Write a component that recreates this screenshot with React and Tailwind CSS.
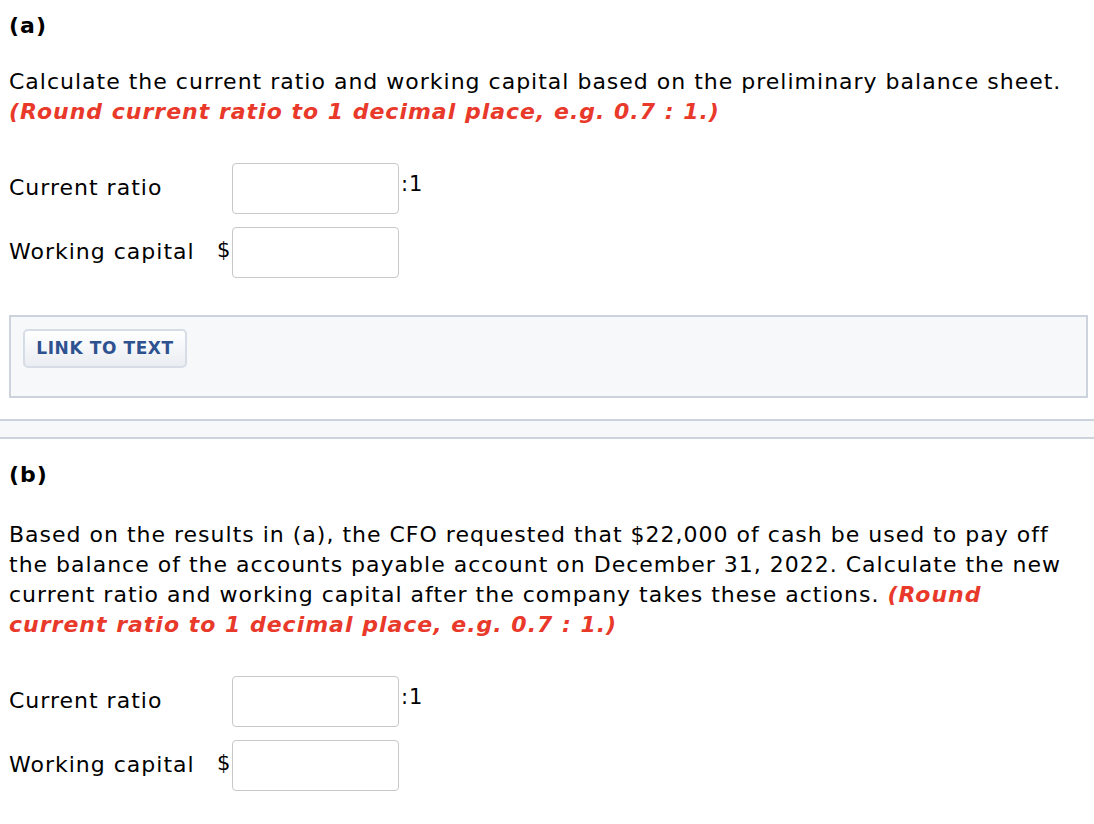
import React from "react";

const font = { fontFamily: '"DejaVu Sans", Verdana, sans-serif' };

function Row({ label, dollar, suffix }) {
  return (
    <div className="flex items-start">
      <div className="w-[208px] whitespace-nowrap pt-[10px] text-[22px] leading-[30px] tracking-[1px] text-black">{label}</div>
      <div className="w-[15px] pt-[8px] text-[21px] leading-[30px] text-black">{dollar ? "$" : ""}</div>
      <div className="h-[51px] w-[167px] rounded-[4px] border border-[#c8c8c8] bg-white" />
      {suffix ? <div className="pl-[2px] pt-[6px] text-[21px] leading-[30px] tracking-[1px] text-black">:1</div> : null}
    </div>
  );
}

const red = "font-bold italic text-[#e8392a]";

export default function App() {
  return (
    <div className="w-[1094px] bg-white text-black" style={font}>
      <div className="px-[9px] pt-[11px]">
        <div className="text-[22px] font-bold leading-[30px] tracking-[1px]">(a)</div>
        <div className="mt-[26px] whitespace-nowrap text-[22px] leading-[30px] tracking-[1px]">
          Calculate the current ratio and working capital based on the preliminary balance sheet.
          <br />
          <span className={red}>(Round current ratio to 1 decimal place, e.g. 0.7 : 1.)</span>
        </div>
        <div className="mt-[36px] flex flex-col gap-[13px]">
          <Row label="Current ratio" suffix />
          <Row label="Working capital" dollar />
        </div>
        <div className="mt-[37px] h-[83px] w-[1079px] border-2 border-[#ccd3dd] bg-[#f6f8fa] pl-[12px] pt-[12px]">
          <div className="flex h-[39px] w-[164px] items-center justify-center rounded-[5px] border-2 border-[#d6dde6] bg-gradient-to-b from-white to-[#eaedf2] text-[17px] font-bold tracking-[0.6px] text-[#2e5290]">
            LINK TO TEXT
          </div>
        </div>
      </div>
      <div className="mt-[21px] h-[20px] border-y-2 border-[#ccd3dd] bg-[#f6f8fa]" />
      <div className="px-[9px]">
        <div className="mt-[21px] text-[22px] font-bold leading-[30px] tracking-[1px]">(b)</div>
        <div className="mt-[30px] whitespace-nowrap text-[22px] leading-[30px] tracking-[1px]">
          Based on the results in (a), the CFO requested that $22,000 of cash be used to pay off
          <br />
          the balance of the accounts payable account on December 31, 2022. Calculate the new
          <br />
          current ratio and working capital after the company takes these actions.{" "}
          <span className={red}>(Round</span>
          <br />
          <span className={red}>current ratio to 1 decimal place, e.g. 0.7 : 1.)</span>
        </div>
        <div className="mt-[36px] flex flex-col gap-[13px]">
          <Row label="Current ratio" suffix />
          <Row label="Working capital" dollar />
        </div>
      </div>
    </div>
  );
}
